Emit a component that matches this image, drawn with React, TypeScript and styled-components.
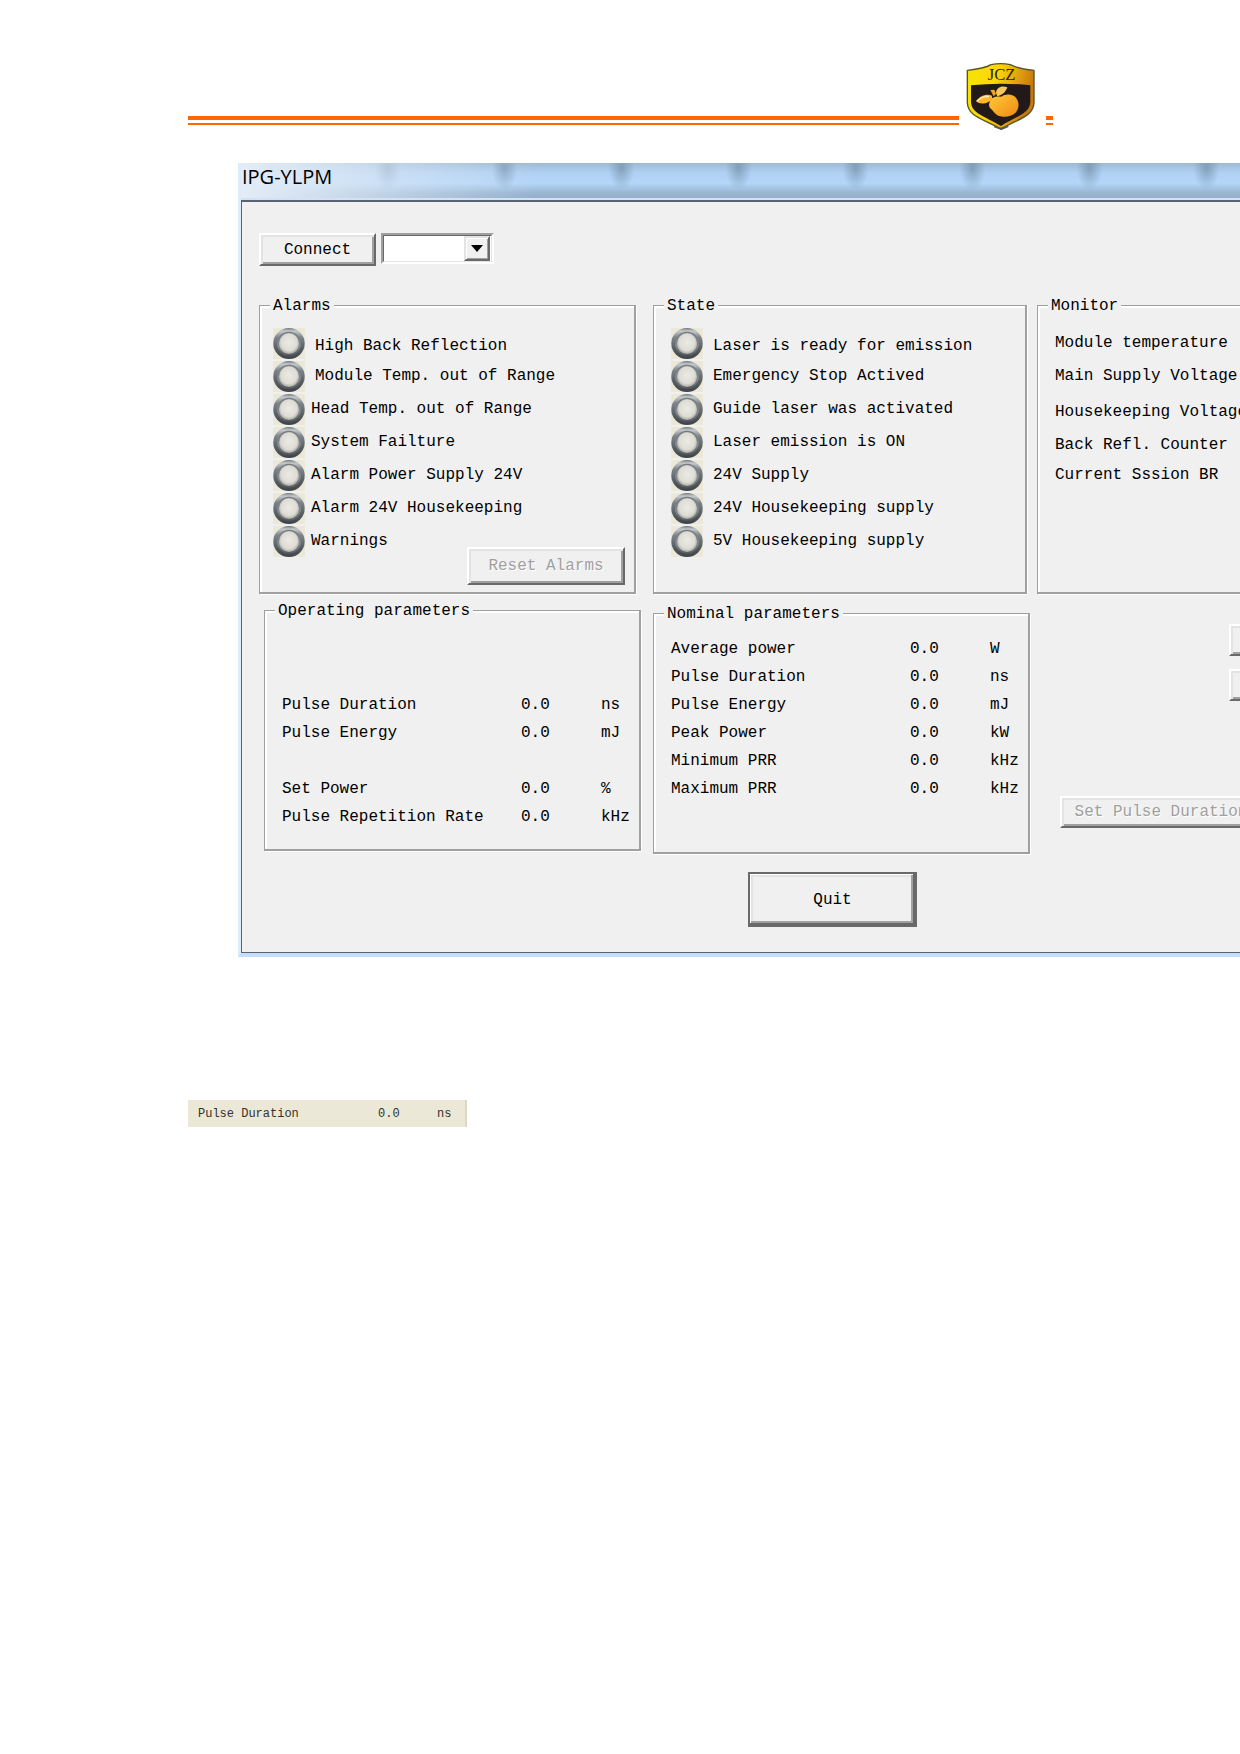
import React from "react";
import styled, { createGlobalStyle } from "styled-components";

const face = "#f0f0f0";
const shadow = "#a0a0a0";
const darkShadow = "#696969";
const mono = '"Liberation Mono", "Courier New", monospace';

const GlobalStyle = createGlobalStyle`
  *, *::before, *::after { box-sizing: border-box; }
  body { margin: 0; background: #fff; color: #000; }
`;

const Page = styled.main`
  font: 16px/20px ${mono};
  overflow: hidden;
`;

const Letterhead = styled.header`
  display: flex;
  align-items: flex-start;
  margin: 62px 187px 33px 188px;
`;

const DoubleRule = styled.div<{ $short?: boolean }>`
  flex: ${(p) => (p.$short ? "0 0 7px" : "1")};
  height: 9px;
  margin-top: 54px;
  border-top: 4px solid #ff6600;
  border-bottom: 2px solid #ff6600;
`;

const LogoBox = styled.div`
  flex: none;
  height: 68px;
  padding: 0 11px 0 7px;

  svg { display: block; }
`;

const Window = styled.section`
  margin-left: 238px;
  overflow: hidden;
  border-left: 3px solid #dcecfb;
  border-bottom: 4px solid #c3defa;
`;

const TitleBar = styled.h1`
  height: 37px;
  margin: 0 0 0 -3px;
  padding: 1px 4px 0;
  border-bottom: 2px solid #d5e1f0;
  font: 20px/26px "Open Sans", "Noto Sans", sans-serif;
  background:
    linear-gradient(90deg, #e4edf7 0, rgba(222, 233, 246, 0.75) 100px, rgba(200, 220, 242, 0) 300px),
    radial-gradient(ellipse 13px 22px at 50% 15%, rgba(98, 126, 152, 0.55), rgba(98, 126, 152, 0)) 91px 0 / 117px 35px repeat-x,
    linear-gradient(180deg, #9dbad6 0, #b0d1f2 10px, #b4d6f8 20px, #98b5d1 30px, #92aecb 35px);
`;

const Client = styled.div`
  border-top: 2px solid #566373;
  border-left: 1px solid #566373;
  border-bottom: 1px solid #566373;
  background: ${face};
  padding: 31px 0 25px 17px;
`;

const Toolbar = styled.div`
  display: flex;
  gap: 5px;
  margin-bottom: 30px;
`;

const Button = styled.button<{ $width: number; $height?: number }>`
  flex: none;
  width: ${(p) => p.$width}px;
  height: ${(p) => p.$height ?? 32}px;
  padding: 0;
  border: 2px solid;
  border-color: #fff ${darkShadow} ${darkShadow} #fff;
  border-radius: 0;
  background: ${face};
  box-shadow: inset 2px 2px #e3e3e3, inset -2px -2px ${shadow};
  color: #000;
  font: inherit;
  white-space: nowrap;

  &:disabled {
    color: ${shadow};
    text-shadow: 1px 1px #fff;
  }
`;

const ResetButton = styled(Button)`
  grid-area: 1 / 1;
  place-self: end;
`;

const QuitButton = styled(Button)`
  margin: 18px 0 0 95px;
  border-color: ${darkShadow};
  box-shadow: inset -2px -2px ${darkShadow}, inset 1px 1px #fff,
    inset -4px -4px ${shadow}, inset 3px 3px #e3e3e3;
`;

const Combo = styled.div`
  position: relative;
  width: 113px;
  height: 31px;
  border: 2px solid;
  border-color: ${shadow} #fff #fff ${shadow};
`;

const ComboSelect = styled.select`
  display: block;
  width: 100%;
  height: 100%;
  padding: 0 28px 0 4px;
  border: 1px solid;
  border-color: ${darkShadow} #e3e3e3 #e3e3e3 ${darkShadow};
  border-radius: 0;
  appearance: none;
  background: #fff;
  font: inherit;
`;

const ComboArrow = styled.span`
  position: absolute;
  top: 1px;
  right: 2px;
  display: grid;
  place-items: center;
  width: 26px;
  height: 25px;
  border: 2px solid;
  border-color: #e3e3e3 ${darkShadow} ${darkShadow} #e3e3e3;
  background: ${face};
  box-shadow: inset 1px 1px #fff, inset -1px -1px ${shadow};
  pointer-events: none;

  &::before {
    content: "";
    border: 6px solid transparent;
    border-top: 7px solid #000;
    border-bottom: 0;
  }
`;

const Panels = styled.div`
  display: grid;
  grid-template-columns: 394px 384px minmax(320px, 1fr);
`;

const Column = styled.div`
  display: flex;
  flex-direction: column;
`;

const Group = styled.fieldset<{ $margin: string }>`
  min-width: 0;
  margin: ${(p) => p.$margin};
  padding: 0;
  border: solid ${shadow};
  border-width: 1px 2px 2px 1px;
  box-shadow: 1px 1px #fff, inset 2px 2px #fff;
`;

const Legend = styled.legend`
  margin-left: 10px;
  padding: 2px 3px 0;
  background: ${face};
  line-height: 17px;
`;

const GroupBody = styled.div<{ $height: number; $padding: string }>`
  display: grid;
  align-content: start;
  justify-items: start;
  min-height: ${(p) => p.$height}px;
  padding: ${(p) => p.$padding};
`;

const AlarmBody = styled(GroupBody)`
  align-content: stretch;
`;

const LampList = styled.ul<{ $gap: number }>`
  grid-area: 1 / 1;
  display: flex;
  flex-direction: column;
  gap: 2px;
  margin: 0;
  padding: 0;
  list-style: none;

  li {
    display: flex;
    align-items: center;
    gap: ${(p) => p.$gap}px;
    height: 31px;
    white-space: nowrap;
  }
`;

const LampText = styled.span<{ $indent?: boolean }>`
  padding-left: ${(p) => (p.$indent ? 4 : 0)}px;
  padding-bottom: 2px;

  li:first-child > & {
    padding-top: 4px;
    padding-bottom: 0;
  }
`;

const MonitorItem = styled.div<{ $space: number }>`
  margin-bottom: ${(p) => p.$space}px;
  white-space: nowrap;
`;

const Readings = styled.table<{ $small?: boolean }>`
  width: ${(p) => (p.$small ? 267 : 349)}px;
  border-collapse: collapse;
  table-layout: fixed;
  font-size: ${(p) => (p.$small ? 12 : 16)}px;

  th, td {
    height: ${(p) => (p.$small ? 27 : 28)}px;
    padding: 0;
    font-weight: normal;
    text-align: left;
    white-space: nowrap;
  }
  th { width: ${(p) => (p.$small ? 180 : 239)}px; }
  td { width: ${(p) => (p.$small ? 59 : 80)}px; }
  td:last-child { width: auto; }
`;

const Actions = styled.div`
  display: flex;
  flex-direction: column;
  gap: 13px;
  margin: 30px 0 95px 192px;
`;

const PulseButton = styled(Button)`
  margin-left: 23px;
`;

const Strip = styled.section`
  width: 279px;
  margin: 143px 0 0 188px;
  padding-left: 10px;
  border-right: 2px solid #dbd8c5;
  background: #ebe8d7;
  color: #33322c;
`;

const alarms = [
  { text: "High Back Reflection", indent: true },
  { text: "Module Temp. out of Range", indent: true },
  { text: "Head Temp. out of Range" },
  { text: "System Failture" },
  { text: "Alarm Power Supply 24V" },
  { text: "Alarm 24V Housekeeping" },
  { text: "Warnings" },
];

const states = [
  { text: "Laser is ready for emission" },
  { text: "Emergency Stop Actived" },
  { text: "Guide laser was activated" },
  { text: "Laser emission is ON" },
  { text: "24V Supply" },
  { text: "24V Housekeeping supply" },
  { text: "5V Housekeeping supply" },
];

const monitors = [
  { text: "Module temperature", space: 13 },
  { text: "Main Supply Voltage", space: 16 },
  { text: "Housekeeping Voltage", space: 13 },
  { text: "Back Refl. Counter", space: 10 },
  { text: "Current Sssion BR", space: 0 },
];

type Reading = [string, string, string] | null;

const operating: Reading[] = [
  ["Pulse Duration", "0.0", "ns"],
  ["Pulse Energy", "0.0", "mJ"],
  null,
  ["Set Power", "0.0", "%"],
  ["Pulse Repetition Rate", "0.0", "kHz"],
];

const nominal: Reading[] = [
  ["Average power", "0.0", "W"],
  ["Pulse Duration", "0.0", "ns"],
  ["Pulse Energy", "0.0", "mJ"],
  ["Peak Power", "0.0", "kW"],
  ["Minimum PRR", "0.0", "kHz"],
  ["Maximum PRR", "0.0", "kHz"],
];

function ReadingTable({ rows, small }: { rows: Reading[]; small?: boolean }) {
  return (
    <Readings $small={small}>
      <tbody>
        {rows.map((row, i) =>
          row ? (
            <tr key={i}>
              <th scope="row">{row[0]}</th>
              <td>{row[1]}</td>
              <td>{row[2]}</td>
            </tr>
          ) : (
            <tr key={i}>
              <td colSpan={3} />
            </tr>
          )
        )}
      </tbody>
    </Readings>
  );
}

function Lamp() {
  return (
    <svg width="32" height="31" viewBox="0 0 32 31" aria-hidden="true">
      <rect width="32" height="31" fill="#ebe8d7" />
      <ellipse cx="16" cy="15.5" rx="15.7" ry="15.5" fill="url(#lampRim)" />
      <ellipse cx="16" cy="15.8" rx="12" ry="12" fill="url(#lampRing)" />
      <ellipse cx="16" cy="15.5" rx="10" ry="10.5" fill="url(#lampGlass)" />
    </svg>
  );
}

const Defs = styled.svg`
  position: absolute;
`;

function LampDefs() {
  return (
    <Defs width="0" height="0" aria-hidden="true">
      <defs>
        <linearGradient id="lampRim" x1="0" y1="0" x2="0" y2="1">
          <stop offset="0" stopColor="#70757a" />
          <stop offset="0.1" stopColor="#c4c9cd" />
          <stop offset="0.3" stopColor="#7e848b" />
          <stop offset="0.7" stopColor="#555b62" />
          <stop offset="1" stopColor="#3e4348" />
        </linearGradient>
        <linearGradient id="lampRing" x1="0" y1="0" x2="0" y2="1">
          <stop offset="0" stopColor="#73797d" />
          <stop offset="0.6" stopColor="#85898b" />
          <stop offset="1" stopColor="#55595d" />
        </linearGradient>
        <radialGradient id="lampGlass" cx="0.5" cy="0.45" r="0.56">
          <stop offset="0" stopColor="#ebeae4" />
          <stop offset="0.7" stopColor="#dddcd5" />
          <stop offset="1" stopColor="#a5a59f" />
        </radialGradient>
      </defs>
    </Defs>
  );
}

function Lamps({ items, gap }: { items: { text: string; indent?: boolean }[]; gap: number }) {
  return (
    <LampList $gap={gap}>
      {items.map((item) => (
        <li key={item.text}>
          <Lamp />
          <LampText $indent={item.indent}>{item.text}</LampText>
        </li>
      ))}
    </LampList>
  );
}

function Logo() {
  return (
    <svg width="69" height="68" viewBox="75 38 207 204" role="img" aria-label="JCZ">
      <defs>
        <linearGradient id="gold" x1="0" y1="0" x2="1" y2="0.25">
          <stop offset="0" stopColor="#f4e400" />
          <stop offset="0.45" stopColor="#ffd60a" />
          <stop offset="1" stopColor="#c9780e" />
        </linearGradient>
        <linearGradient id="fruit" x1="0" y1="0" x2="1" y2="1">
          <stop offset="0" stopColor="#ffc93a" />
          <stop offset="1" stopColor="#f08a12" />
        </linearGradient>
      </defs>
      <path
        d="M79 63Q130 58 150 46Q180 40 208 46Q230 58 279 63V160C277 202 232 208 180 239C126 208 81 202 79 160Z"
        fill="url(#gold)"
        stroke="#5b5326"
        strokeWidth="4"
        strokeLinejoin="round"
      />
      <path
        d="M90 108Q180 98 268 108V158C266 193 228 200 180 230C130 200 92 193 90 158Z"
        fill="#211a18"
      />
      <path d="M160 232Q180 242 202 231L181 240Z" fill="#444" stroke="#555" strokeWidth="4" />
      <path
        d="M146 158C150 143 165 140 181 142C194 132 218 134 227 148C236 162 234 181 222 192C208 205 181 205 167 196C159 192 157 184 151 180C143 174 143 165 146 158Z"
        fill="url(#fruit)"
      />
      <path d="M148 122L160 121L165 134L158 141Z" fill="#f2a51c" />
      <path d="M165 131C166 115 181 107 199 114C194 128 183 138 169 141Z" fill="#f7c75e" />
      <path d="M153 139C138 131 115 139 105 156C119 168 145 162 153 148Z" fill="#ffb52c" />
      <path d="M108 155C119 145 132 140 144 142" fill="none" stroke="#ffe9b0" strokeWidth="5" />
      <text
        x="182"
        y="91"
        textAnchor="middle"
        fontFamily="Liberation Serif, serif"
        fontSize="50"
        fill="#2b2408"
      >
        JCZ
      </text>
    </svg>
  );
}

export default function App() {
  return (
    <Page>
      <GlobalStyle />
      <LampDefs />
      <Letterhead>
        <DoubleRule />
        <LogoBox>
          <Logo />
        </LogoBox>
        <DoubleRule $short />
      </Letterhead>

      <Window>
        <TitleBar>IPG-YLPM</TitleBar>
        <Client>
          <Toolbar>
            <Button type="button" $width={117} $height={33}>
              Connect
            </Button>
            <Combo>
              <ComboSelect aria-label="Port" defaultValue="">
                <option value="" />
              </ComboSelect>
              <ComboArrow />
            </Combo>
          </Toolbar>

          <Panels>
            <Column>
              <Group $margin="0 17px 0 0">
                <Legend>Alarms</Legend>
                <AlarmBody $height={277} $padding="13px 9px 7px 13px">
                  <Lamps items={alarms} gap={6} />
                  <ResetButton type="button" disabled $width={158} $height={38}>
                    Reset Alarms
                  </ResetButton>
                </AlarmBody>
              </Group>
              <Group $margin="7px 12px 0 5px">
                <Legend>Operating parameters</Legend>
                <GroupBody $height={229} $padding="71px 0 0 17px">
                  <ReadingTable rows={operating} />
                </GroupBody>
              </Group>
            </Column>

            <Column>
              <Group $margin="0 10px 0 0">
                <Legend>State</Legend>
                <GroupBody $height={277} $padding="13px 0 0 17px">
                  <Lamps items={states} gap={10} />
                </GroupBody>
              </Group>
              <Group $margin="10px 7px 0 0">
                <Legend>Nominal parameters</Legend>
                <GroupBody $height={229} $padding="12px 0 0 17px">
                  <ReadingTable rows={nominal} />
                </GroupBody>
              </Group>
              <QuitButton type="button" $width={169} $height={55}>
                Quit
              </QuitButton>
            </Column>

            <Column>
              <Group $margin="0">
                <Legend>Monitor</Legend>
                <GroupBody $height={277} $padding="18px 0 0 17px">
                  {monitors.map((item) => (
                    <MonitorItem key={item.text} $space={item.space}>
                      {item.text}
                    </MonitorItem>
                  ))}
                </GroupBody>
              </Group>
              <Actions>
                <Button type="button" aria-label="Start" $width={110} />
                <Button type="button" aria-label="Stop" $width={110} />
              </Actions>
              <PulseButton type="button" disabled $width={202}>
                Set Pulse Duration
              </PulseButton>
            </Column>
          </Panels>
        </Client>
      </Window>

      <Strip>
        <ReadingTable rows={[["Pulse Duration", "0.0", "ns"]]} small />
      </Strip>
    </Page>
  );
}
